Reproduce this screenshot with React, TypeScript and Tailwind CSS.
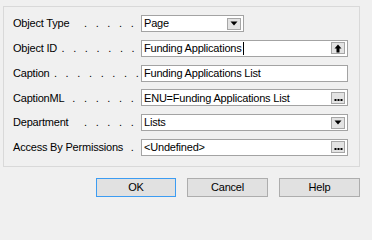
import React from "react";

type Row = {
  label: string;
  dots: number;
  value: string;
  width: string;
  button?: "down" | "up" | "more";
  caret?: boolean;
};

const ROWS: Row[] = [
  { label: "Object Type", dots: 5, value: "Page", width: "w-[103px]", button: "down" },
  { label: "Object ID", dots: 7, value: "Funding Applications", width: "w-[207px]", button: "up", caret: true },
  { label: "Caption", dots: 8, value: "Funding Applications List", width: "w-[207px]" },
  { label: "CaptionML", dots: 6, value: "ENU=Funding Applications List", width: "w-[207px]", button: "more" },
  { label: "Department", dots: 5, value: "Lists", width: "w-[207px]", button: "down" },
  { label: "Access By Permissions", dots: 1, value: "<Undefined>", width: "w-[207px]", button: "more" },
];

function SmallButton({ kind }: { kind: "down" | "up" | "more" }) {
  return (
    <span className="ml-auto mr-[2px] flex h-[12px] w-[14px] shrink-0 items-center justify-center border border-[#a6a6a6] bg-[#e3e3e3]">
      {kind === "down" && (
        <svg width="8" height="5" viewBox="0 0 8 5">
          <path d="M0.5 0.5 H7.5 L4 4.5 Z" fill="#000" />
        </svg>
      )}
      {kind === "up" && (
        <svg width="8" height="9" viewBox="0 0 8 9">
          <path d="M4 0.5 L7.5 4.5 H5.5 V8.5 H2.5 V4.5 H0.5 Z" fill="#000" />
        </svg>
      )}
      {kind === "more" && (
        <svg width="9" height="8" viewBox="0 0 9 8">
          <rect x="0.5" y="5" width="2" height="2" fill="#000" />
          <rect x="3.5" y="5" width="2" height="2" fill="#000" />
          <rect x="6.5" y="5" width="2" height="2" fill="#000" />
        </svg>
      )}
    </span>
  );
}

function FieldRow({ row }: { row: Row }) {
  return (
    <div className="flex h-[17px] items-center">
      <div className="flex w-[128px] items-center pr-[3px]">
        <span className="whitespace-nowrap">{row.label}</span>
        <span className="ml-auto flex">
          {Array.from({ length: row.dots }).map((_, i) => (
            <span key={i} className="w-[11.7px] text-center">
              .
            </span>
          ))}
        </span>
      </div>
      <div className={`flex h-[17px] items-center border border-[#a3a3a3] bg-white pl-[2px] ${row.width}`}>
        <span className="whitespace-nowrap">{row.value}</span>
        {row.caret && <span className="ml-[1px] h-[13px] w-[1px] bg-black" />}
        {row.button && <SmallButton kind={row.button} />}
      </div>
    </div>
  );
}

export default function App() {
  return (
    <div
      className="h-screen min-h-[210px] w-[372px] overflow-hidden bg-[#f0f0f0] pt-[6px] text-[11px] tracking-[-0.2px] text-black"
      style={{ fontFamily: '"Liberation Sans", Arial, sans-serif' }}
    >
      <div className="ml-[3px] flex h-[161px] w-[357px] flex-col gap-[7.8px] border border-[#d9d9d9] pl-[9px] pt-[8px]">
        {ROWS.map((row) => (
          <FieldRow key={row.label} row={row} />
        ))}
      </div>
      <div className="mr-[12px] mt-[11px] flex justify-end gap-[11px]">
        <button className="h-[19px] w-[80px] border border-[#3c9cf2] bg-[#e1e1e1]">OK</button>
        <button className="h-[19px] w-[81px] border border-[#adadad] bg-[#e1e1e1]">Cancel</button>
        <button className="h-[19px] w-[81px] border border-[#adadad] bg-[#e1e1e1]">Help</button>
      </div>
    </div>
  );
}
